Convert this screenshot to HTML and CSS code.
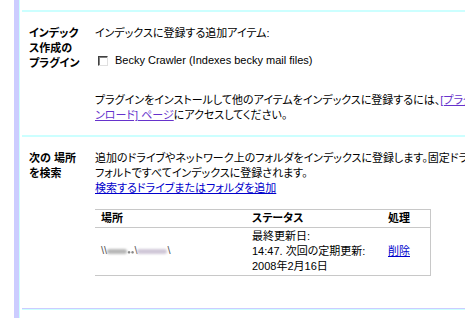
FILE: index.html
```html
<!DOCTYPE html>
<html lang="ja">
<head>
    <meta charset="UTF-8">
    <title>インデックスの設定</title>
    <link rel="stylesheet" href="styles.css">
</head>
<body>
    <div class="page">
        <div class="rail"></div>
        <div class="main">
            <div class="section">
                <div class="label">インデック<br>ス作成の<br>プラグイン</div>
                <div class="content">
                    <div class="intro">インデックスに登録する追加アイテム:</div>
                    <label class="plugin">
                        <span class="check"></span>
                        <span>Becky Crawler (Indexes becky mail files)</span>
                    </label>
                    <div class="note">
                        プラグインをインストールして他のアイテムをインデックスに登録するには、<a href="#" class="visited">[プラグインのダウ<br>ンロード] ページ</a>にアクセスしてください。
                    </div>
                </div>
            </div>
            <div class="section">
                <div class="label">次の 場所<br>を検索</div>
                <div class="content">
                    <div>追加のドライブやネットワーク上のフォルダをインデックスに登録します。固定ドライブのデ<br>フォルトですべてインデックスに登録されます。</div>
                    <a href="#">検索するドライブまたはフォルダを追加</a>
                    <table class="places">
                        <thead>
                            <tr>
                                <th class="col-place">場所</th>
                                <th class="col-status">ステータス</th>
                                <th>処理</th>
                            </tr>
                        </thead>
                        <tbody>
                            <tr>
                                <td class="path">\\<span class="smudge grey"></span><span class="dots">●●</span>\<span class="smudge pale"></span>\</td>
                                <td>最終更新日:<br>14:47. 次回の定期更新:<br>2008年2月16日</td>
                                <td><a href="#">削除</a></td>
                            </tr>
                        </tbody>
                    </table>
                </div>
            </div>
            <div class="rule-end"></div>
        </div>
    </div>
</body>
</html>
```

FILE: styles.css
```css
body {
    margin: 0;
    background-color: #fff;
    color: #000;
    font-family: "Liberation Sans", "Noto Sans CJK JP", sans-serif;
    font-size: 11px;
    font-feature-settings: "palt";
    overflow: hidden;
}

.page {
    display: flex;
    height: 318px;
}

.rail {
    flex: none;
    width: 5px;
    margin-left: 14px;
    background-color: #ccccff;
    border-right: 1px solid #ccffff;
}

.main {
    flex: 1;
    margin-left: 2px;
    padding-top: 10px;
}

.section {
    display: flex;
    border-top: 2px solid #ccffff;
    padding: 14px 0 12px 7px;
    line-height: 15px;
}

.label {
    flex: none;
    width: 66px;
    font-weight: bold;
}

.content {
    white-space: nowrap;
}

a {
    color: #0000cc;
}

a.visited {
    color: #6633cc;
}

.plugin {
    display: flex;
    align-items: center;
    gap: 7px;
    margin: 12px 0 25px 3px;
}

.check {
    width: 8px;
    height: 8px;
    border-top: 1px solid #404040;
    border-left: 1px solid #404040;
    border-bottom: 1px solid #e0e0e0;
    border-right: 1px solid #e0e0e0;
    box-shadow: inset 1px 1px 0 #808080;
    background-color: #fff;
}

.places {
    width: 336px;
    margin: 13px 0 20px;
    border-collapse: collapse;
    border-top: 1px solid #c8c8c8;
    border-bottom: 1px solid #c8c8c8;
    border-right: 1px solid #c8c8c8;
}

.places th {
    height: 17px;
    padding: 0 6px;
    text-align: left;
    border-bottom: 1px solid #c8c8c8;
}

.places td {
    padding: 1px 6px;
    vertical-align: middle;
}

.col-place {
    width: 139px;
}

.col-status {
    width: 124px;
}

.path {
    color: #555;
}

.smudge {
    display: inline-block;
    height: 5px;
    border-radius: 3px;
    filter: blur(1px);
    vertical-align: middle;
}

.smudge.grey {
    width: 20px;
    background-color: #b8b8b8;
}

.smudge.pale {
    width: 30px;
    background-color: #d0c8d8;
}

.dots {
    font-size: 6px;
    color: #888;
    filter: blur(0.5px);
}

.rule-end {
    border-top: 1px solid #ccccff;
    border-bottom: 1px solid #ccffff;
}
```
